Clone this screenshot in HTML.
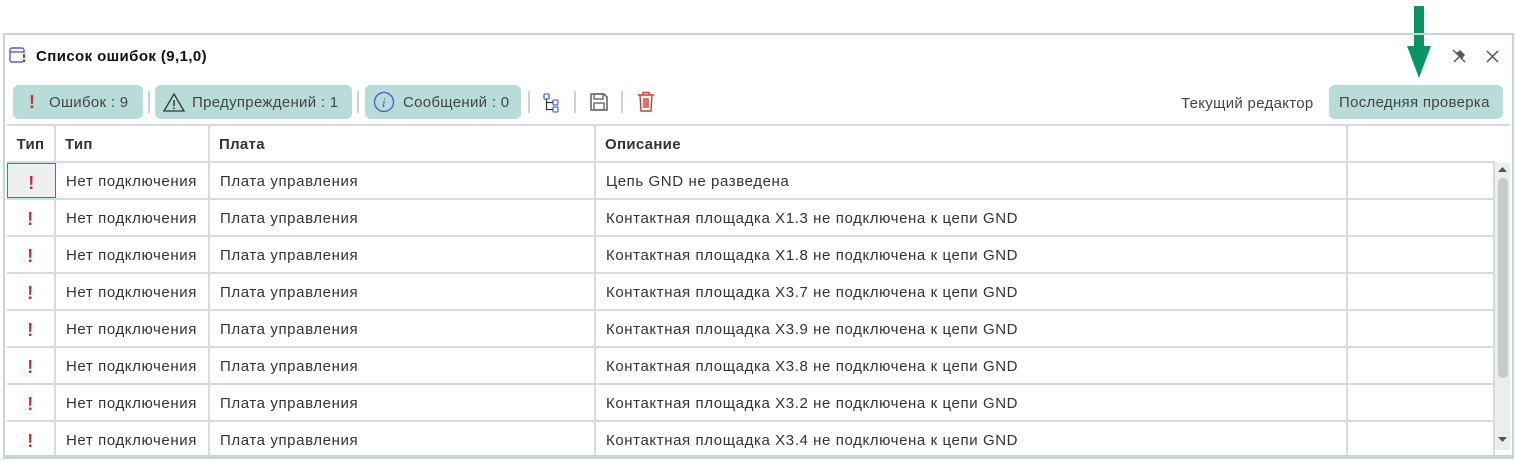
<!DOCTYPE html>
<html><head><meta charset="utf-8"><style>
*{margin:0;padding:0;box-sizing:border-box}
body{width:1516px;height:459px;background:#fff;font-family:"Liberation Sans",sans-serif;color:#333;position:relative;overflow:hidden;font-size:15px;letter-spacing:0.6px}
.panel{position:absolute;left:3px;top:33px;width:1511px;height:426px;border:2px solid #c9d5d4;border-bottom:none}
.abs{position:absolute}
.title{left:36px;top:48px;font-weight:bold;font-size:15px;color:#111;letter-spacing:0.4px}
.btn{position:absolute;top:85px;height:34px;background:#b8dcd8;border-radius:6px;font-size:15px;color:#444;line-height:36px;letter-spacing:0.3px}
.sep{position:absolute;top:91px;width:2px;height:22px;background:#c9d5d4}
.grid{position:absolute;left:7px;top:124px;width:1503px;border-top:2px solid #d4dcdc}
.row{position:absolute;left:0;width:1488px;height:37px;border-bottom:2px solid #d4dcdc}
.cell{position:absolute;top:0;height:100%;line-height:38px;padding-left:10px;white-space:nowrap;border-right:2px solid #d4dcdc}
.hdr .cell{font-weight:bold;padding-left:9px;letter-spacing:0.3px}
.c0{left:0;width:49px;padding-left:0!important;text-align:center}
.c1{left:49px;width:154px}
.c2{left:203px;width:386px}
.c3{left:589px;width:752px}
.c4{left:1341px;width:147px}
.ex{color:#c8312f;font-weight:bold;font-size:18px}
</style></head><body>
<svg class="abs" style="left:1407px;top:6px" width="24" height="72"><rect x="7" y="0" width="10" height="42" fill="#079466"/><polygon points="0,40 24,40 12,72" fill="#079466"/></svg>
<div class="panel"></div>
<svg class="abs" style="left:9px;top:47px" width="18" height="17"><rect x="1" y="1" width="14" height="14" rx="2" fill="none" stroke="#5660c8" stroke-width="1.4"/><line x1="1" y1="5" x2="15" y2="5" stroke="#5660c8" stroke-width="1.4"/><rect x="13" y="6" width="4" height="6" fill="#fff"/><line x1="15" y1="7" x2="15" y2="11" stroke="#c8312f" stroke-width="2"/><rect x="14" y="13" width="2" height="2" fill="#c8312f"/></svg>
<div class="abs title">Список ошибок (9,1,0)</div>
<svg class="abs" style="left:1451px;top:48px" width="16" height="16"><path d="M3 14 L8 9 M6 4 L12 10 M9 3 L13 7 L11 9 L7 5 Z" stroke="#555" stroke-width="1.5" fill="#555"/><line x1="2" y1="2" x2="14" y2="14" stroke="#555" stroke-width="1.3"/></svg>
<svg class="abs" style="left:1486px;top:50px" width="13" height="13"><path d="M1 1L12 12M12 1L1 12" stroke="#555" stroke-width="1.5"/></svg>
<div class="btn" style="left:13px;width:130px"><span class="ex abs" style="left:16px;top:-1px">!</span><span class="abs" style="left:36px">Ошибок : 9</span></div>
<div class="sep" style="left:148px"></div>
<div class="btn" style="left:155px;width:197px"><svg class="abs" style="left:8px;top:7px" width="22" height="20"><path d="M11 2L21 19H1Z" fill="none" stroke="#333" stroke-width="1.3"/><line x1="11" y1="8" x2="11" y2="14" stroke="#333" stroke-width="1.5"/><rect x="10.2" y="15.5" width="1.6" height="1.6" fill="#333"/></svg><span class="abs" style="left:37px">Предупреждений : 1</span></div>
<div class="sep" style="left:357px"></div>
<div class="btn" style="left:365px;width:156px"><svg class="abs" style="left:8px;top:6px" width="22" height="22"><circle cx="11" cy="11" r="9.5" fill="none" stroke="#3f5dd0" stroke-width="1.3"/><text x="11" y="16" text-anchor="middle" font-size="13" font-style="italic" fill="#3f5dd0" font-family="Liberation Serif">i</text></svg><span class="abs" style="left:38px">Сообщений : 0</span></div>
<div class="sep" style="left:528px"></div>
<svg class="abs" style="left:543px;top:93px" width="18" height="20"><rect x="1" y="1" width="5" height="5" rx="1" fill="none" stroke="#4a6ad8" stroke-width="1.3"/><rect x="10" y="7" width="5" height="5" rx="1" fill="none" stroke="#4a6ad8" stroke-width="1.3"/><rect x="10" y="14" width="5" height="5" rx="1" fill="none" stroke="#4a6ad8" stroke-width="1.3"/><path d="M3.5 6V16.5H10M3.5 9.5H10" fill="none" stroke="#333" stroke-width="1.2"/></svg>
<div class="sep" style="left:574px"></div>
<svg class="abs" style="left:589px;top:92px" width="20" height="20"><path d="M2 2H15L18 5V18H2Z" fill="#fff" stroke="#666" stroke-width="1.6"/><rect x="5" y="2" width="9" height="5" fill="none" stroke="#666" stroke-width="1.4"/><rect x="5" y="11" width="10" height="7" fill="none" stroke="#666" stroke-width="1.4"/></svg>
<div class="sep" style="left:621px"></div>
<svg class="abs" style="left:637px;top:91px" width="18" height="22"><path d="M1 4H17M6 4V1.5H12V4M3 4L4 20H14L15 4M7 7V17M9 7V17M11 7V17" fill="none" stroke="#d03a2f" stroke-width="1.4"/></svg>
<div class="abs" style="left:1181px;top:95px;color:#444;font-size:15px;letter-spacing:0.3px">Текущий редактор</div>
<div class="btn" style="left:1329px;width:174px;top:85px"><span class="abs" style="left:10px">Последняя проверка</span></div>
<div class="grid">
<div class="row hdr" style="top:0;height:37px"><div class="cell c0" style="font-weight:bold">Тип</div><div class="cell c1">Тип</div><div class="cell c2">Плата</div><div class="cell c3">Описание</div><div class="cell c4" style="border-right:none"></div></div>
<div class="row" style="top:37px"><div class="cell c0" style="background:#eef0ef;border:1px solid #2a8a84"><span class="ex">!</span></div><div class="cell c1">Нет подключения</div><div class="cell c2">Плата управления</div><div class="cell c3">Цепь GND не разведена</div><div class="cell c4"></div></div>
<div class="row" style="top:74px"><div class="cell c0"><span class="ex">!</span></div><div class="cell c1">Нет подключения</div><div class="cell c2">Плата управления</div><div class="cell c3">Контактная площадка X1.3 не подключена к цепи GND</div><div class="cell c4"></div></div>
<div class="row" style="top:111px"><div class="cell c0"><span class="ex">!</span></div><div class="cell c1">Нет подключения</div><div class="cell c2">Плата управления</div><div class="cell c3">Контактная площадка X1.8 не подключена к цепи GND</div><div class="cell c4"></div></div>
<div class="row" style="top:148px"><div class="cell c0"><span class="ex">!</span></div><div class="cell c1">Нет подключения</div><div class="cell c2">Плата управления</div><div class="cell c3">Контактная площадка X3.7 не подключена к цепи GND</div><div class="cell c4"></div></div>
<div class="row" style="top:185px"><div class="cell c0"><span class="ex">!</span></div><div class="cell c1">Нет подключения</div><div class="cell c2">Плата управления</div><div class="cell c3">Контактная площадка X3.9 не подключена к цепи GND</div><div class="cell c4"></div></div>
<div class="row" style="top:222px"><div class="cell c0"><span class="ex">!</span></div><div class="cell c1">Нет подключения</div><div class="cell c2">Плата управления</div><div class="cell c3">Контактная площадка X3.8 не подключена к цепи GND</div><div class="cell c4"></div></div>
<div class="row" style="top:259px"><div class="cell c0"><span class="ex">!</span></div><div class="cell c1">Нет подключения</div><div class="cell c2">Плата управления</div><div class="cell c3">Контактная площадка X3.2 не подключена к цепи GND</div><div class="cell c4"></div></div>
<div class="row" style="top:296px;border-bottom:none"><div class="cell c0"><span class="ex">!</span></div><div class="cell c1">Нет подключения</div><div class="cell c2">Плата управления</div><div class="cell c3">Контактная площадка X3.4 не подключена к цепи GND</div><div class="cell c4"></div></div>
</div>
<div class="abs" style="left:1495px;top:163px;width:15px;height:287px;background:#eceeed"></div>
<svg class="abs" style="left:1497px;top:166px" width="11" height="8"><path d="M1 6L5.5 1L10 6Z" fill="#555"/></svg>
<div class="abs" style="left:1498px;top:178px;width:10px;height:200px;background:#c4cbca;border-radius:5px"></div>
<svg class="abs" style="left:1497px;top:436px" width="11" height="8"><path d="M1 1L5.5 6L10 1Z" fill="#555"/></svg>
<div class="abs" style="left:3px;top:455px;width:1511px;height:4px;background:#c9d5d4"></div>
</body></html>
